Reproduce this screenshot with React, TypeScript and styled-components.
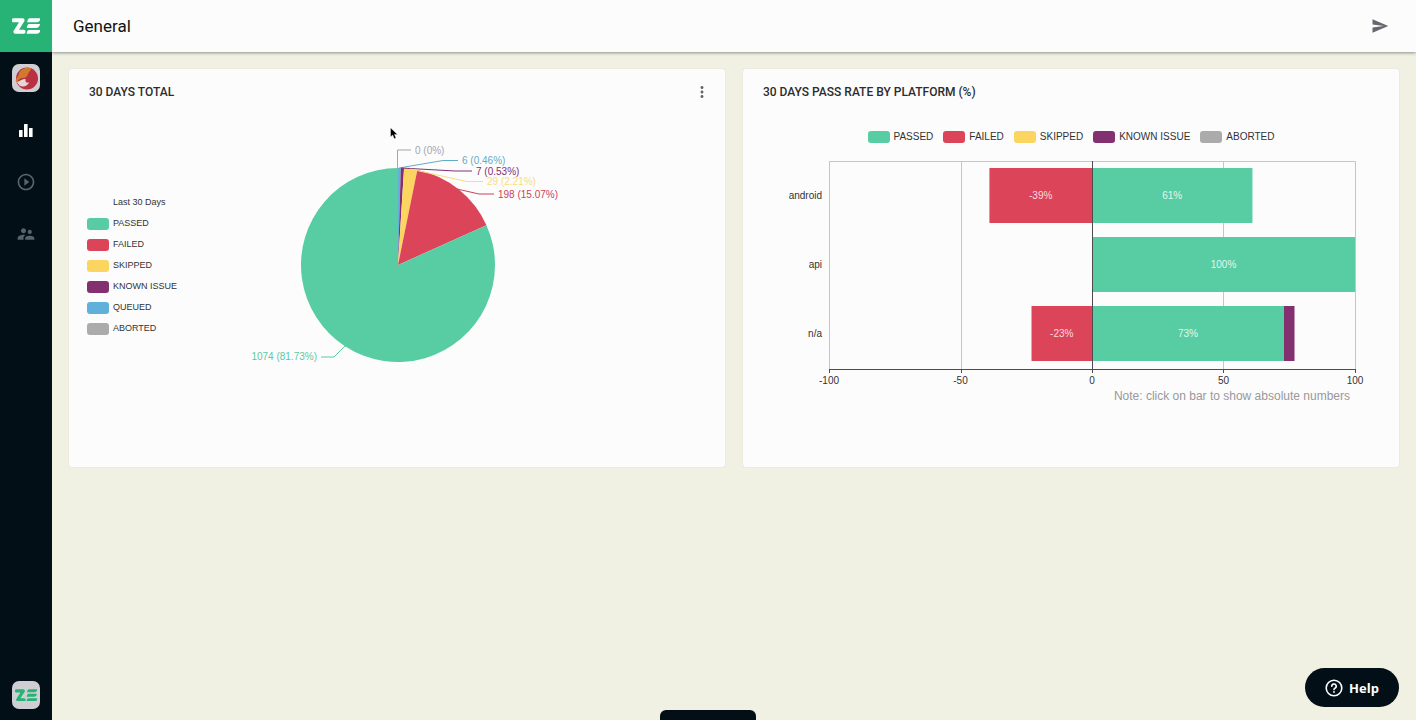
import React from "react";
import styled, { createGlobalStyle } from "styled-components";
import {
  MdMoreVert,
  MdPlayCircleOutline,
  MdSend,
  MdSupervisorAccount,
} from "react-icons/md";

const colors = {
  passed: "#58cda4",
  failed: "#dc4459",
  skipped: "#fbd55f",
  known: "#823070",
  queued: "#5fb0db",
  aborted: "#ababab",
  dark: "#020f16",
  green: "#27b376",
  page: "#f0f1e2",
  card: "#fcfcfd",
};

const GlobalStyle = createGlobalStyle`
  *, *::before, *::after { box-sizing: border-box; }
  body {
    margin: 0;
    background: ${colors.page};
    color: #333;
    font-family: Roboto, "Liberation Sans", sans-serif;
  }
  h1, h2, p, ul { margin: 0; padding: 0; }
`;

const Shell = styled.div`
  display: flex;
  min-height: 100vh;
`;

const Sidebar = styled.nav`
  display: flex;
  flex-direction: column;
  align-items: center;
  flex: 0 0 52px;
  height: 100vh;
  position: sticky;
  top: 0;
  padding-bottom: 11px;
  background: ${colors.dark};
`;

const Brand = styled.a`
  display: grid;
  place-items: center;
  width: 52px;
  height: 52px;
  margin-bottom: 12px;
  background: ${colors.green};
  color: #fff;
`;

const SideLink = styled.a<{ $active?: boolean }>`
  display: grid;
  place-items: center;
  width: 52px;
  height: 52px;
  color: ${(p) => (p.$active ? "#fff" : "#58646b")};
`;

const Tile = styled.a`
  display: grid;
  place-items: center;
  width: 28px;
  height: 28px;
  border-radius: 7px;
  background: #cfcfd3;
  color: ${colors.green};
`;

const ProjectTile = styled(Tile)`
  margin-bottom: 12px;
`;

const AccountTile = styled(Tile)`
  margin-top: auto;
`;

const Main = styled.div`
  display: flex;
  flex-direction: column;
  flex: 1;
  min-width: 0;
`;

const TopBar = styled.header`
  display: flex;
  align-items: center;
  justify-content: space-between;
  height: 52px;
  padding: 0 24px 0 21px;
  background: ${colors.card};
  box-shadow: 0 1px 3px rgba(0, 0, 0, 0.4);
`;

const PageTitle = styled.h1`
  font-size: 17px;
  line-height: 24px;
  font-weight: 400;
  color: #111;
`;

const IconButton = styled.button`
  display: grid;
  place-items: center;
  width: 24px;
  height: 24px;
  padding: 0;
  border: 0;
  background: none;
  color: #66666c;
`;

const Board = styled.main`
  display: grid;
  grid-template-columns: repeat(2, minmax(0, 1fr));
  gap: 18px;
  padding: 17px;
`;

const Card = styled.section`
  min-height: 398px;
  padding-bottom: 24px;
  border-radius: 2px;
  background: ${colors.card};
  box-shadow: 0 0 1px rgba(0, 0, 0, 0.2);
`;

const CardHeader = styled.div`
  display: flex;
  align-items: center;
  justify-content: space-between;
  height: 46px;
  padding: 0 11px 0 20px;
`;

const CardTitle = styled.h2`
  font-size: 12px;
  line-height: 16px;
  font-weight: 500;
  color: #2c2c2c;
`;

const PieLayout = styled.div`
  display: grid;
  grid-template-columns: 1fr 340px 1fr;
  padding-top: 25px;
`;

const PieLegend = styled.ul`
  list-style: none;
  margin: 52px 0 0 18px;
  font: 9px/21px "Liberation Sans", Arial, sans-serif;
`;

const BarLegend = styled.ul`
  display: flex;
  justify-content: center;
  gap: 10px;
  padding-top: 11px;
  list-style: none;
  font: 10px/21px "Liberation Sans", Arial, sans-serif;
`;

const LegendItem = styled.li`
  display: flex;
  align-items: center;
  gap: 4px;
  white-space: nowrap;
`;

const Swatch = styled.span<{ $color: string }>`
  width: 22px;
  height: 12px;
  border-radius: 3px;
  background: ${(p) => p.$color};
`;

const PieFigure = styled.div`
  position: relative;
`;

const Pointer = styled.svg`
  position: absolute;
  left: 163px;
  top: -13px;
`;

const ChartSvg = styled.svg`
  display: block;
  width: 100%;
  height: auto;
  font: 10px "Liberation Sans", Arial, sans-serif;
`;

const Note = styled.p`
  padding-right: 49px;
  text-align: right;
  font: 12px/14px "Liberation Sans", Arial, sans-serif;
  color: #98989b;
`;

const HelpButton = styled.button`
  position: fixed;
  right: 17px;
  bottom: 13px;
  display: flex;
  align-items: center;
  justify-content: center;
  gap: 6px;
  width: 94px;
  height: 39px;
  padding: 0;
  border: 0;
  border-radius: 20px;
  background: ${colors.dark};
  color: #fff;
  font: 700 13px/18px "Open Sans", sans-serif;
`;

const DrawerHandle = styled.button`
  position: fixed;
  left: 50%;
  bottom: 0;
  width: 96px;
  height: 10px;
  margin-left: -48px;
  padding: 0;
  border: 0;
  border-radius: 6px 6px 0 0;
  background: ${colors.dark};
`;

function Logo({ width }: { width: number }) {
  return (
    <svg width={width} viewBox="0 0 28 16" fill="none" aria-hidden="true">
      <path
        d="M1.600 2.300H10.600L3.400 13.700H11.600"
        stroke="currentColor"
        strokeWidth="4"
        strokeLinejoin="round"
        strokeLinecap="round"
      />
      <path
        fill="currentColor"
        d="M17.600 .3H28.600Q28 4 25 4.200H15.200Q15.800 .5 17.600 .3ZM17 6.100H28Q27.400 9.800 24.600 10H14.800Q15.200 6.400 17 6.100ZM16.800 11.900H28.600Q28 15.600 25 15.800H14.600Q15 12.200 16.800 11.900Z"
      />
    </svg>
  );
}

function ProjectPicture() {
  return (
    <svg width="24" height="24" viewBox="0 0 24 24" aria-hidden="true">
      <circle cx="13" cy="12.500" r="11" fill="#b93142" />
      <path
        d="M2 16C1 12 5 11 5 7C7 3 12 1 16 2C19 3 15 5 14 8C13 11 11 12 9 12C6 12 4 14 3.500 16Z"
        fill="#d07a2f"
      />
      <path d="M2.500 15.500C5 16.500 7 13 11.500 13C11 16 13 18 15 16C14 20 9 22 5.500 19.500Z" fill="#e6d6d6" />
    </svg>
  );
}

function StatsIcon() {
  return (
    <svg width="14" height="14" viewBox="0 0 14 14" fill="currentColor" aria-hidden="true">
      <rect x="0" y="7" width="3.600" height="7" rx=".5" />
      <rect x="5" y="1" width="3.600" height="13" rx=".5" />
      <rect x="10" y="5" width="3.600" height="9" rx=".5" />
    </svg>
  );
}

const slices = [
  { color: colors.queued, value: 6 },
  { color: colors.known, value: 7 },
  { color: colors.skipped, value: 29 },
  { color: colors.failed, value: 198 },
  { color: colors.passed, value: 1074 },
];

const callouts = [
  { color: "#a5a5ab", line: "M170.500 28V10H184", x: 188, y: 14, text: "0 (0%)" },
  { color: "#64abc4", line: "M172 28L216 20.500H231", x: 235, y: 24, text: "6 (0.46%)" },
  { color: "#823070", line: "M174 28L228 31H245", x: 249, y: 35, text: "7 (0.53%)" },
  { color: "#f7dc84", line: "M183 29L240 41.500H256", x: 260, y: 45, text: "29 (2.21%)" },
  { color: "#cc4358", line: "M230 49L252 54H267", x: 271, y: 58, text: "198 (15.07%)" },
  { color: "#5cc9a0", line: "M118 206L107 217H94", x: 90, y: 220, text: "1074 (81.73%)", end: true },
];

function PieChart() {
  const cx = 171;
  const cy = 125;
  const r = 97;
  const total = slices.reduce((sum, s) => sum + s.value, 0);
  const at = (v: number) => {
    const a = (v / total) * Math.PI * 2;
    return `${cx + r * Math.sin(a)} ${cy - r * Math.cos(a)}`;
  };
  let sum = 0;
  return (
    <ChartSvg viewBox="0 0 340 230" role="img" aria-label="Test results of the last 30 days">
      {slices.map((s) => {
        const from = sum;
        sum += s.value;
        const large = s.value > total / 2 ? 1 : 0;
        return (
          <path
            key={s.color}
            fill={s.color}
            d={`M${cx} ${cy}L${at(from)}A${r} ${r} 0 ${large} 1 ${at(sum)}Z`}
          />
        );
      })}
      {callouts.map((c) => (
        <g key={c.text}>
          <path d={c.line} fill="none" stroke={c.color} />
          <text x={c.x} y={c.y} fill={c.color} textAnchor={c.end ? "end" : "start"}>
            {c.text}
          </text>
        </g>
      ))}
    </ChartSvg>
  );
}

const platforms = [
  { name: "android", failed: 39, passed: 61, known: 0 },
  { name: "api", failed: 0, passed: 100, known: 0 },
  { name: "n/a", failed: 23, passed: 73, known: 4 },
];

function PlatformChart() {
  const zero = 349;
  const unit = 2.63;
  const px = (v: number) => zero + v * unit;
  return (
    <ChartSvg viewBox="0 0 656 242" role="img" aria-label="Pass rate by platform in percent">
      <g stroke="#c6c6ca" fill="none">
        <path d="M86 14.500H612.500V222M86.500 14V222M218.500 14V222M480.500 14V222" />
      </g>
      {platforms.map((p, i) => {
        const y = 21 + i * 69;
        return (
          <g key={p.name}>
            <text x="79" y={y + 31} textAnchor="end" fill="#333">
              {p.name}
            </text>
            <rect x={px(-p.failed)} y={y} width={p.failed * unit} height="55" fill={colors.failed} />
            <rect x={zero} y={y} width={p.passed * unit} height="55" fill={colors.passed} />
            <rect x={px(p.passed)} y={y} width={p.known * unit} height="55" fill={colors.known} />
            {p.failed > 0 && (
              <text x={px(-p.failed / 2)} y={y + 31} textAnchor="middle" fill="#f8dce0">
                -{p.failed}%
              </text>
            )}
            <text x={px(p.passed / 2)} y={y + 31} textAnchor="middle" fill="#e0f7ee">
              {p.passed}%
            </text>
          </g>
        );
      })}
      <path
        d="M86 222.500H613M86.500 222V226M218.500 222V226M349.500 14V226M480.500 222V226M612.500 222V226"
        stroke="#4c4c50"
        fill="none"
      />
      {[-100, -50, 0, 50, 100].map((v) => (
        <text key={v} x={px(v)} y="237" textAnchor="middle" fill="#333">
          {v}
        </text>
      ))}
    </ChartSvg>
  );
}

const pieLegend = [
  ["PASSED", colors.passed],
  ["FAILED", colors.failed],
  ["SKIPPED", colors.skipped],
  ["KNOWN ISSUE", colors.known],
  ["QUEUED", colors.queued],
  ["ABORTED", colors.aborted],
];

const barLegend = pieLegend.filter(([name]) => name !== "QUEUED");

function LegendRows({ items }: { items: string[][] }) {
  return (
    <>
      {items.map(([name, color]) => (
        <LegendItem key={name}>
          <Swatch $color={color} />
          {name}
        </LegendItem>
      ))}
    </>
  );
}

export default function App() {
  return (
    <>
      <GlobalStyle />
      <Shell>
        <Sidebar aria-label="Main">
          <Brand href="#" aria-label="Home">
            <Logo width={28} />
          </Brand>
          <ProjectTile href="#project" aria-label="Project">
            <ProjectPicture />
          </ProjectTile>
          <SideLink href="#dashboards" aria-label="Dashboards" $active>
            <StatsIcon />
          </SideLink>
          <SideLink href="#runs" aria-label="Test runs">
            <MdPlayCircleOutline size={20} />
          </SideLink>
          <SideLink href="#members" aria-label="Members">
            <MdSupervisorAccount size={20} />
          </SideLink>
          <AccountTile href="#account" aria-label="Account">
            <Logo width={22} />
          </AccountTile>
        </Sidebar>
        <Main>
          <TopBar>
            <PageTitle>General</PageTitle>
            <IconButton type="button" aria-label="Send by email">
              <MdSend size={18} />
            </IconButton>
          </TopBar>
          <Board>
            <Card>
              <CardHeader>
                <CardTitle>30 DAYS TOTAL</CardTitle>
                <IconButton type="button" aria-label="Widget menu">
                  <MdMoreVert size={18} />
                </IconButton>
              </CardHeader>
              <PieLayout>
                <PieLegend>
                  <LegendItem>
                    <Swatch $color="transparent" />
                    Last 30 Days
                  </LegendItem>
                  <LegendRows items={pieLegend} />
                </PieLegend>
                <PieFigure>
                  <PieChart />
                  <Pointer width="9" height="13" viewBox="0 0 9 13" aria-hidden="true">
                    <path
                      d="M.5 .8V10L2.700 8L4.200 11.800L6 11L4.500 7.400H7.500Z"
                      fill="#000"
                      stroke="#fff"
                      strokeWidth=".4"
                    />
                  </Pointer>
                </PieFigure>
              </PieLayout>
            </Card>
            <Card>
              <CardHeader>
                <CardTitle>30 DAYS PASS RATE BY PLATFORM (%)</CardTitle>
              </CardHeader>
              <BarLegend>
                <LegendRows items={barLegend} />
              </BarLegend>
              <PlatformChart />
              <Note>Note: click on bar to show absolute numbers</Note>
            </Card>
          </Board>
        </Main>
      </Shell>
      <DrawerHandle type="button" aria-label="Open drawer" />
      <HelpButton type="button">
        <svg width="18" height="18" viewBox="0 0 18 18" fill="none" stroke="#fff" aria-hidden="true">
          <circle cx="9" cy="9" r="7.800" strokeWidth="1.600" />
          <path d="M6.800 7.300A2.200 2.200 0 1 1 9.900 9.200Q9 9.700 9 10.600" strokeWidth="1.600" strokeLinecap="round" />
          <circle cx="9" cy="13" r=".9" fill="#fff" stroke="none" />
        </svg>
        Help
      </HelpButton>
    </>
  );
}
